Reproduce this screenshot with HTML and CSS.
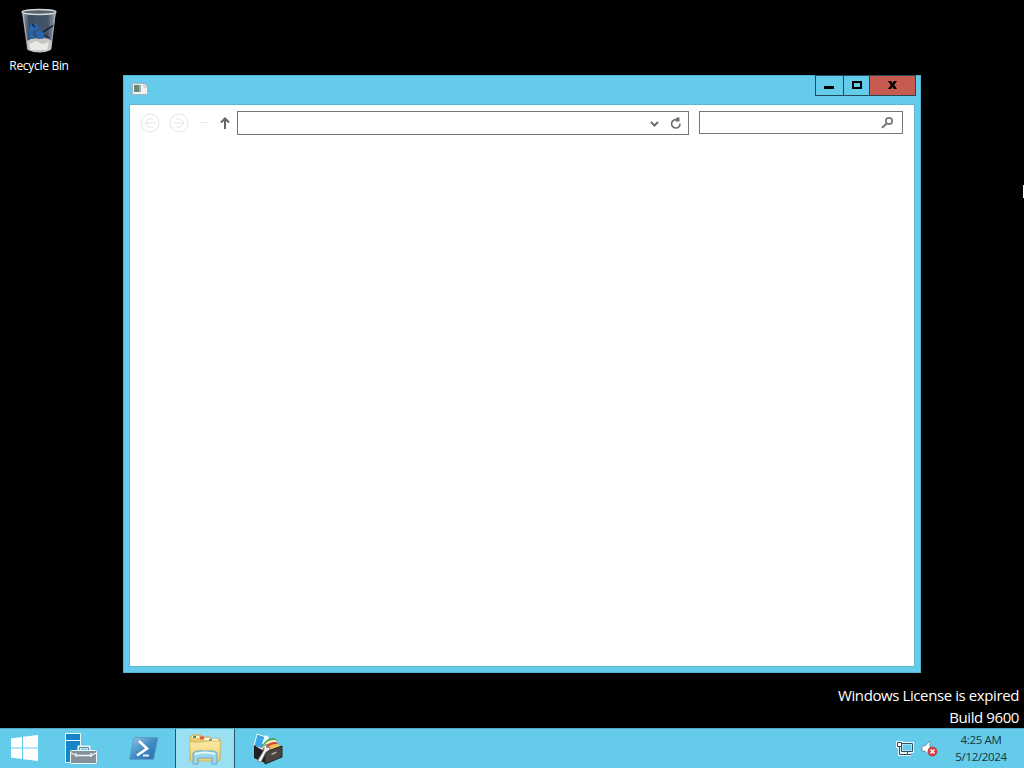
FILE: index.html
```
<!DOCTYPE html>
<html lang="en">
  <head>
    <meta charset="UTF-8" />
    <meta name="viewport" content="width=device-width, initial-scale=1.0" />
    <title>Desktop</title>
    <link rel="stylesheet" href="styles.css">
  </head>
  <body>
    <div class="desktop">
      <div class="shortcut">
        <svg width="40" height="46" viewBox="0 0 40 46">
          <defs>
            <linearGradient id="glass">
              <stop offset="0" stop-color="#a3adb5" />
              <stop offset=".2" stop-color="#3c4c60" />
              <stop offset=".75" stop-color="#465467" />
              <stop offset="1" stop-color="#9ba5ad" />
            </linearGradient>
          </defs>
          <path d="M3 4.500h34l-5 38q-12 5-24 0z" fill="url(#glass)" />
          <path d="M8 34q6-4 12-2 7-3 13 2l-1.200 9q-11 5-23 0z" fill="#c5c7c6" />
          <path d="M10 37l7-3 6 3 7-2-2 8H12z" fill="#e9e9e6" />
          <path d="M10 22l2-5 5-1 3 5-2 3-3-1-1 4 2 4-5 1zM17 25l5-2 3 4-1 5-6-1z" fill="#2467b4" />
          <path d="M24 25l11-7M13 17l3 3M26 28l4 3" stroke="#14263d" stroke-width="1.500" fill="none" />
          <ellipse cx="20" cy="5" rx="17" ry="2.500" fill="#59636c" stroke="#d4d8da" stroke-width="1.300" />
          <path d="M4 7l5 35M36 7l-4 35" stroke="#bcc5cb" fill="none" opacity=".7" />
        </svg>
        <span>Recycle Bin</span>
      </div>

      <div class="window">
        <div class="titlebar">
          <svg class="app-icon" width="16" height="14" viewBox="0 0 16 14">
            <path d="M.5 1.500h12l3 3v8H.5z" fill="#f0f1f0" stroke="#a9b4b6" />
            <path d="M2 3h5v7H2z" fill="#668b7b" />
            <path d="M7 3h2v7H7z" fill="#a6adb2" />
            <path d="M12 2v3h3" stroke="#b8bec0" fill="none" />
          </svg>
          <div class="controls">
            <div class="control minimize">
              <svg width="11" height="11"><path d="M1 7h10v3H1z" /></svg>
            </div>
            <div class="control maximize">
              <svg width="11" height="11"><path d="M2 3h8v6H2z" fill="none" stroke="#000" stroke-width="2" /></svg>
            </div>
            <div class="control close">
              <svg width="11" height="11"><path d="M1 2h3l1.500 2L7 2h3L7.200 6 10 10H7L5.500 7.800 4 10H1l2.800-4z" /></svg>
            </div>
          </div>
        </div>
        <div class="client">
          <div class="toolbar">
            <svg class="nav" width="104" height="24" viewBox="0 0 104 24" fill="none">
              <g stroke="#e6e6e6">
                <circle cx="20" cy="12" r="9" />
                <path d="M25 12h-9M19 8l-4 4 4 4M17 8h6M17 16h6" />
                <circle cx="49" cy="12" r="9" />
                <path d="M44 12h9M50 8l4 4-4 4M46 8h4M46 16h4" />
                <path d="M70 11.500h7" />
              </g>
              <path d="M95 18V8M91 11.500l4-4 4 4" stroke="#656565" stroke-width="2" />
            </svg>
            <div class="address">
              <svg width="40" height="22" viewBox="0 0 40 22" fill="none" stroke="#6c6c6c">
                <path d="M3 10l3.500 3.500L10 10" stroke-width="2" />
                <path d="M32 11.500A4.200 4.200 0 1 1 29.500 8" stroke-width="1.600" />
                <path d="M28.500 5.500l3 0v4h-4z" fill="#6c6c6c" stroke="none" />
              </svg>
            </div>
            <div class="search">
              <svg width="14" height="14" viewBox="0 0 14 14" fill="none" stroke="#777">
                <circle cx="9" cy="5" r="3.200" stroke-width="1.700" />
                <path d="M6.700 7.500L2 11.700" stroke-width="2" />
              </svg>
            </div>
          </div>
        </div>
      </div>

      <div class="watermark">
        <div class="license">Windows License is expired</div>
        <div class="build">Build 9600</div>
      </div>
      <!-- mouse pointer, nearly off the right edge -->
      <div class="pointer"></div>
    </div>

    <div class="taskbar">
      <div class="task start">
        <svg width="28" height="28" viewBox="0 0 28 28" fill="#fff">
          <path d="M0 4.500l11-1.500v10.500H0zM12 2.800L27 1v12.500H12zM0 14.500h11V25L0 23.500zM12 14.500h15V27l-15-1.800z" />
        </svg>
      </div>
      <div class="task manager">
        <svg width="34" height="34" viewBox="0 0 34 34">
          <path d="M1.500 1.500h15v29h-15z" fill="#1684c7" stroke="#e8f7fc" />
          <path d="M2 8.500h14" stroke="#e8f7fc" />
          <path d="M15 18v-3h10v3" fill="none" stroke="#e8f7fc" stroke-width="3" />
          <path d="M15.500 18v-2.500h9V18" fill="none" stroke="#71838c" />
          <rect x="6.500" y="18.500" width="26" height="13" rx="1" fill="#82919a" stroke="#eef5f7" />
          <path d="M7 21l6 2.500h14l5-2.500M12 21v4M27 21v4" fill="none" stroke="#f4f5f5" stroke-width="1.300" />
        </svg>
      </div>
      <div class="task powershell">
        <svg width="30" height="24" viewBox="0 0 30 24">
          <defs>
            <linearGradient id="shell" x1="0" y1="0" x2="1" y2="1">
              <stop offset="0" stop-color="#9cc8e4" />
              <stop offset=".5" stop-color="#3f8cc4" />
              <stop offset="1" stop-color="#2870ab" />
            </linearGradient>
          </defs>
          <path d="M6 .5h22q1 0 .8 1l-4 20q-.2 1-1.500 1H1.500q-1 0-.8-1l4-20q.2-1 1.300-1z" fill="url(#shell)" stroke="#5b9fc9" />
          <path d="M10 4l8 7.500-10 7" fill="none" stroke="#fff" stroke-width="2.600" />
          <path d="M14 18.500h6" stroke="#e9f3fa" stroke-width="2" />
        </svg>
      </div>
      <div class="task explorer active">
        <svg width="34" height="32" viewBox="0 0 34 32">
          <defs>
            <linearGradient id="folder" x1="0" y1="0" x2="0" y2="1">
              <stop offset="0" stop-color="#fbeaa3" />
              <stop offset="1" stop-color="#edcf72" />
            </linearGradient>
          </defs>
          <path d="M2 3l2-2h9l2 2h7l2 2h8v21H2z" fill="#e8cb74" stroke="#cbb26a" />
          <path d="M4 3h7M15 5h7M23 6h7" stroke="#fffbe3" stroke-width="2" />
          <path d="M5 3h3" stroke="#3a9c61" stroke-width="2" />
          <path d="M12 4h4" stroke="#d65c3c" stroke-width="3" />
          <path d="M21 6h3" stroke="#479eb0" stroke-width="2" />
          <path d="M1.500 8h14l2-1h15l-1 20h-29z" fill="url(#folder)" stroke="#d5b964" />
          <path d="M5 30V19l3-2h18l3 2v11h-5v-6H10v6z" fill="#9fd5ed" stroke="#65a9cc" />
          <path d="M7 20q10-3 20 0" fill="none" stroke="#e7f8fc" stroke-width="2" />
        </svg>
      </div>
      <div class="task tools">
        <svg width="30" height="32" viewBox="0 0 30 32">
          <path d="M4 1l9 3-3 12-9-3z" fill="#38a7e3" stroke="#edf9ff" />
          <path d="M12 2l4 2-3 8-4-1z" fill="#edf9ff" />
          <path d="M9 13q5-9 12-8l3 2-12 13z" fill="#55a449" />
          <path d="M9 15q5-9 13-8l2 2-12 11z" fill="#f6f1d3" />
          <path d="M9 17q6-9 14-8l2 2-13 10z" fill="#d7462d" />
          <path d="M10 19q6-9 15-8l3 3-16 8z" fill="#efc35c" />
          <path d="M1 12l11 7v11L1 25z" fill="#211f1f" />
          <path d="M12 19l17-6v11l-17 7z" fill="#4a4340" stroke="#272423" />
          <path d="M18.500 20.500l5-2v1.500l-5 2z" fill="#bbb4ac" />
          <path d="M5 27l6-10q-1-4 2-6l1 4 3-1q0 4-4 5L8 29q-3 1-3-2z" fill="#f4f4f4" stroke="#67696b" stroke-width=".7" />
        </svg>
      </div>
      <div class="tray">
        <svg width="18" height="18" viewBox="0 0 18 18" fill="none">
          <path d="M5.500 3.500h11v8h-11zM8 14.500h7M11.500 12v3M1.500 2.500h4v4h-4zM3.500 7v7.500H8" stroke="#e7f6fb" stroke-width="3" />
          <path d="M6 4h10v7H6z" fill="#65cbea" stroke="#e7f6fb" />
          <path d="M5.500 3.500h11v8h-11zM8 14.500h7M11.500 12v3M3.500 7v7.500H8" stroke="#304e60" />
          <path d="M1.500 2.500h4v4h-4z" fill="#fff" stroke="#304e60" />
        </svg>
        <svg class="volume" width="17" height="18" viewBox="0 0 17 18">
          <path d="M1 6h3l5-5v15l-5-5H1z" fill="#fff" stroke="#67899a" stroke-width=".8" />
          <circle cx="11.500" cy="11.500" r="4.500" fill="#d43f42" stroke="#b8404a" />
          <path d="M9.500 9.500l4 4m0-4l-4 4" stroke="#fff" stroke-width="1.500" />
        </svg>
        <div class="clock">
          <div class="time">4:25 AM</div>
          <div class="date">5/12/2024</div>
        </div>
      </div>
    </div>
  </body>
</html>
```

FILE: styles.css
```
* {
  box-sizing: border-box;
}

body {
  margin: 0;
  width: 1024px;
  height: 768px;
  overflow: hidden;
  background: #000;
  color: #fff;
  font-family: "Open Sans", "Noto Sans", sans-serif;
  font-size: 12px;
}

svg {
  display: block;
  flex: none;
}

.desktop {
  position: relative;
  height: 728px;
}

.shortcut {
  position: absolute;
  left: 0;
  top: 7px;
  width: 78px;
  display: flex;
  flex-direction: column;
  align-items: center;
}

.shortcut span {
  margin-top: 4px;
  line-height: 17px;
  white-space: nowrap;
  letter-spacing: -0.3px;
}

.window {
  position: absolute;
  left: 123px;
  top: 75px;
  width: 798px;
  height: 598px;
  background: #65cbea;
  border: 1px solid #55b3d0;
  padding: 0 6px 6px;
  display: flex;
  flex-direction: column;
}

.titlebar {
  height: 29px;
  display: flex;
  justify-content: space-between;
  padding-left: 2px;
}

.app-icon {
  margin-top: 6px;
}

.controls {
  display: flex;
  height: 21px;
  margin-top: -1px;
  margin-right: -2px;
  border: 1px solid #234957;
}

.control {
  display: flex;
  align-items: center;
  justify-content: center;
  padding-bottom: 2px;
}

.minimize {
  width: 28px;
  padding-right: 2px;
  border-right: 1px solid #234957;
}

.maximize {
  width: 26px;
  border-right: 1px solid #234957;
}

.close {
  width: 45px;
  background: #c75b50;
}

.client {
  flex: 1;
  background: #fff;
  outline: 1px solid #60b7d1;
}

.toolbar {
  display: flex;
  padding: 6px 11px 0 0;
}

.nav {
  margin-right: 3px;
}

.address,
.search {
  display: flex;
  align-items: center;
  justify-content: flex-end;
  border: 1px solid #777;
}

.address {
  width: 452px;
  height: 24px;
  margin-right: 10px;
}

.search {
  width: 204px;
  height: 23px;
  padding-right: 8px;
}

.watermark {
  position: absolute;
  right: 5px;
  top: 684px;
  font-size: 15px;
  line-height: 22px;
  text-align: right;
  white-space: nowrap;
  letter-spacing: -0.4px;
}

.pointer {
  position: absolute;
  right: 0;
  top: 185px;
  width: 1px;
  height: 13px;
  background: #fff;
}

.taskbar {
  height: 40px;
  background: #65cbea;
  border-top: 1px solid #50a9c5;
  display: flex;
}

.task {
  display: flex;
  align-items: center;
  justify-content: center;
}

.start {
  width: 50px;
  padding-bottom: 2px;
}

.manager {
  width: 62px;
}

.powershell {
  width: 63px;
}

.explorer {
  width: 60px;
  padding-top: 2px;
}

.active {
  background: #9bdff2;
  border: solid #245767;
  border-width: 0 1px;
}

.tools {
  width: 65px;
}

.tray {
  margin-left: auto;
  display: flex;
  align-items: center;
  color: #133440;
}

.volume {
  margin-left: 7px;
}

.clock {
  width: 86px;
  padding-bottom: 2px;
  font-size: 11.5px;
  line-height: 17px;
  text-align: center;
  letter-spacing: -0.35px;
}
```
